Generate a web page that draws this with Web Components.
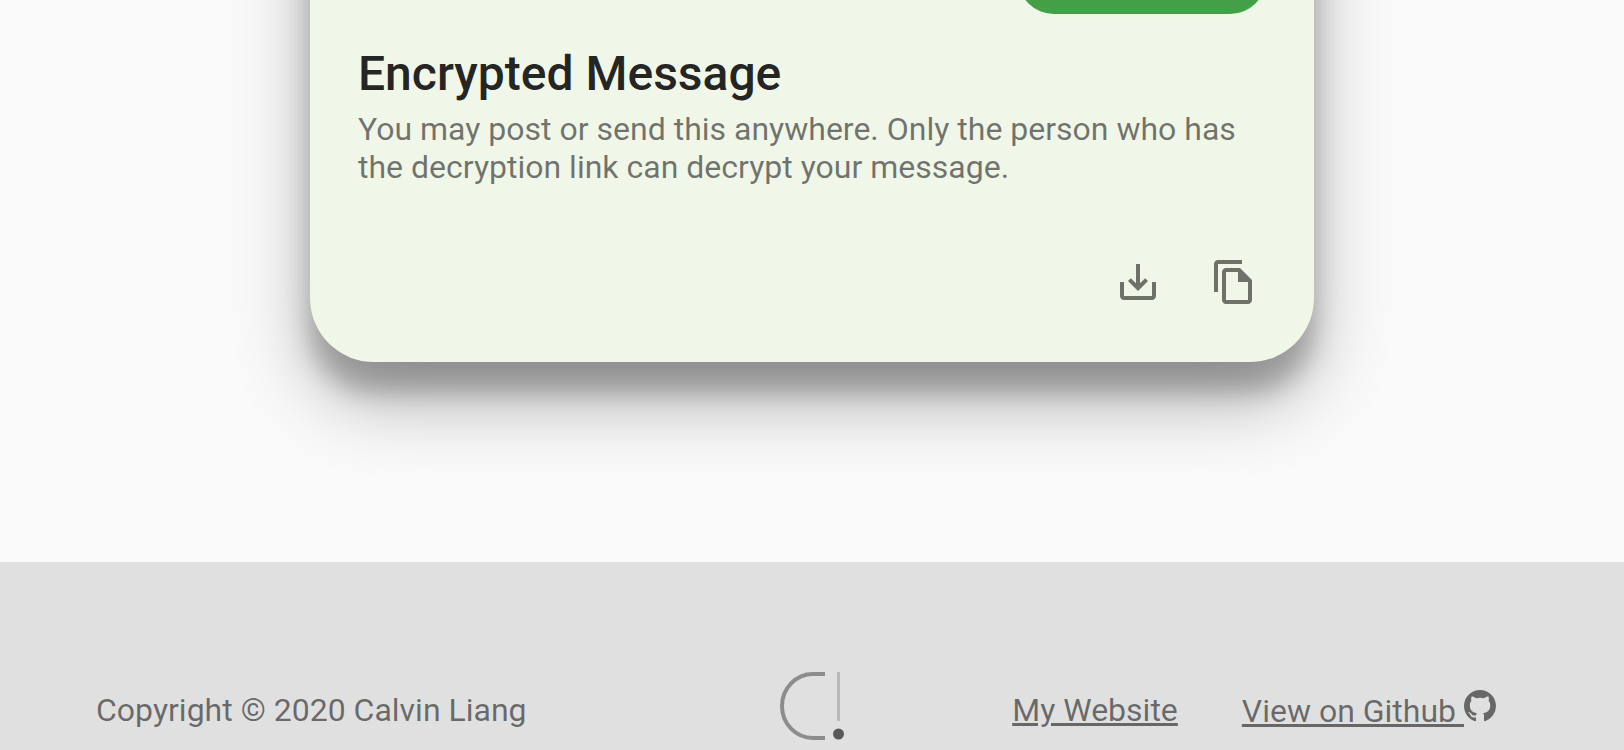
<!DOCTYPE html>
<html lang="en">
<head>
<meta charset="utf-8">
<meta name="viewport" content="width=device-width, initial-scale=1">
<title>Encrypted Message</title>
<style>
  body {
    margin: 0;
    background: #fafafa;
    font-family: Roboto, "Liberation Sans", sans-serif;
    font-size: 32px; line-height: 38px;
  }
</style>
</head>
<body>
<message-app></message-app>
<script>
  const define = (name, html) => {
    const template = document.createElement('template');
    template.innerHTML = html;
    customElements.define(name, class extends HTMLElement {
      constructor() {
        super();
        this.attachShadow({ mode: 'open' }).append(template.content.cloneNode(true));
      }
    });
  };

  define('pill-button', `
    <style>
      :host { display: block; width: 248px; }
      button {
        display: block; width: 100%; height: 72px; border: 0; border-radius: 36px;
        background: #43a047; cursor: pointer;
      }
    </style>
    <button type="button" aria-label="Encrypt"></button>`);

  customElements.define('icon-button', class extends HTMLElement {
    connectedCallback() {
      if (this.shadowRoot) return;
      this.attachShadow({ mode: 'open' }).innerHTML = `
        <style>
          :host { display: block; }
          button {
            display: block; padding: 24px; border: 0; border-radius: 50%;
            background: none; color: rgba(0,0,0,.54); cursor: pointer;
          }
          ::slotted(svg) { display: block; width: 48px; height: 48px; fill: currentColor; }
        </style>
        <button type="button"><slot></slot></button>`;
      this.shadowRoot.querySelector('button').setAttribute('aria-label', this.getAttribute('label'));
    }
  });

  define('message-card', `
    <style>
      :host {
        display: block; box-sizing: border-box; width: 100%; max-width: 1004px;
        padding: 192px 32px 32px;
        background: #f0f6e8; border-radius: 64px;
        box-shadow: 0 38px 76px rgba(0,0,0,.3), 0 30px 24px rgba(0,0,0,.22);
      }
      .submit { display: flex; justify-content: flex-end; padding: 0 16px; }
      .text { padding: 32px 16px 0; color: rgba(0,0,0,.54); }
      .actions { display: flex; justify-content: flex-end; padding-top: 48px; }
    </style>
    <div class="submit"><slot name="submit"></slot></div>
    <div class="text"><slot></slot></div>
    <div class="actions"><slot name="actions"></slot></div>`);

  define('section-heading', `
    <style>
      :host { display: block; }
      h2 { margin: 0; font-size: 48px; line-height: 56px; font-weight: 500; color: rgba(0,0,0,.87); }
      p { margin: 8px 0 0; }
    </style>
    <h2><slot name="title"></slot></h2>
    <p><slot></slot></p>`);

  define('brand-logo', `
    <style>
      :host { display: block; padding-bottom: 8px; }
      svg { display: block; width: 64px; height: 68px; }
    </style>
    <svg viewBox="0 0 64 68" role="img" aria-label="CL logo">
      <path d="M45 2H33A31 32 0 0 0 33 66H45" fill="none" stroke="#8c8c8c" stroke-width="4"/>
      <path d="M57 0h3v49h-3z" fill="#b9b9b9"/>
      <circle cx="58.5" cy="62" r="5.5" fill="#595959"/>
    </svg>`);

  define('site-footer', `
    <style>
      :host {
        display: grid; grid-template-columns: 1fr auto 1fr; align-items: center;
        padding: 110px 96px 2px; background: #e0e0e0; color: rgba(0,0,0,.54);
      }
      nav { display: flex; justify-content: flex-end; align-items: center; gap: 64px; padding-right: 32px; }
      a { color: inherit; text-decoration: underline; white-space: nowrap; }
      a svg { width: 32px; height: 32px; fill: currentColor; }
    </style>
    <div>Copyright © 2020 Calvin Liang</div>
    <brand-logo></brand-logo>
    <nav>
      <a href="#website">My Website</a>
      <a href="#github">View on Github <svg viewBox="0 0 16 16" aria-hidden="true"><path d="M8 0C3.58 0 0 3.58 0 8c0 3.54 2.29 6.53 5.47 7.59.4.07.55-.17.55-.38 0-.19-.01-.82-.01-1.49-2.01.37-2.53-.49-2.69-.94-.09-.23-.48-.94-.82-1.13-.28-.15-.68-.52-.01-.53.63-.01 1.08.58 1.23.82.72 1.21 1.87.87 2.33.66.07-.52.28-.87.51-1.07-1.78-.2-3.64-.89-3.64-3.95 0-.87.31-1.59.82-2.15-.08-.2-.36-1.02.08-2.12 0 0 .67-.21 2.2.82.64-.18 1.32-.27 2-.27s1.36.09 2 .27c1.53-1.04 2.2-.82 2.2-.82.44 1.1.16 1.92.08 2.12.51.56.82 1.27.82 2.15 0 3.07-1.87 3.75-3.65 3.95.29.25.54.73.54 1.48 0 1.07-.01 1.93-.01 2.2 0 .21.15.46.55.38A8.01 8.01 0 0 0 16 8c0-4.42-3.58-8-8-8z"/></svg></a>
    </nav>`);

  define('message-app', `
    <style>
      :host { display: flow-root; overflow: hidden; }
      main { display: flex; justify-content: center; margin-top: -250px; padding-bottom: 200px; }
    </style>
    <main>
      <message-card>
        <pill-button slot="submit"></pill-button>
        <section-heading>
          <span slot="title">Encrypted Message</span>
          You may post or send this anywhere. Only the person who has the decryption link can decrypt your message.
        </section-heading>
        <icon-button slot="actions" label="Download">
          <svg viewBox="0 0 24 24" aria-hidden="true"><path d="M19 12v7H5v-7H3v7c0 1.1.9 2 2 2h14c1.1 0 2-.9 2-2v-7h-2zm-6 .67l2.59-2.58L17 11.5l-5 5-5-5 1.41-1.41L11 12.67V3h2z"/></svg>
        </icon-button>
        <icon-button slot="actions" label="Copy">
          <svg viewBox="0 0 24 24" aria-hidden="true"><path d="M16 1H4c-1.1 0-2 .9-2 2v14h2V3h12V1zm-1 4H8c-1.1 0-1.99.9-1.99 2L6 21c0 1.1.89 2 1.99 2H19c1.1 0 2-.9 2-2V11l-6-6zM8 21V7h6v5h5v9H8z"/></svg>
        </icon-button>
      </message-card>
    </main>
    <site-footer></site-footer>`);
</script>
</body>
</html>
